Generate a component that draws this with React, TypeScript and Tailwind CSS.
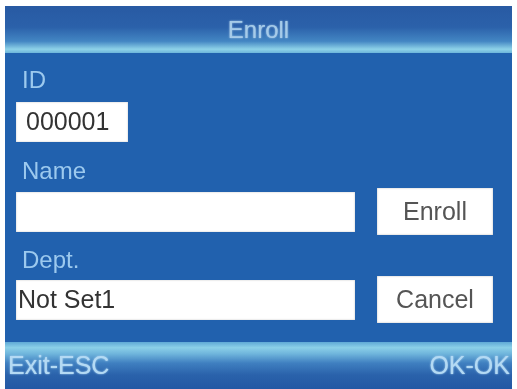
import React from 'react';

// 登録画面（端末のEnrollダイアログ）
const Label = ({ children }: { children: React.ReactNode }) => (
  <div className="pl-[6px] text-[24px] leading-[26px] text-[#9cc9ee]">{children}</div>
);

const Field = ({ value, className = '' }: { value?: string; className?: string }) => (
  <div
    className={`h-[40px] bg-white flex items-center text-[25px] text-[#333] shadow-[inset_0_0_2px_rgba(0,0,0,0.25)] ${className}`}
  >
    {value}
  </div>
);

const Button = ({ label }: { label: string }) => (
  <button className="w-[116px] h-[47px] bg-white flex items-center justify-center text-[25px] text-[#555] shadow-[inset_0_0_2px_rgba(0,0,0,0.3)]">
    {label}
  </button>
);

export default function App() {
  return (
    <div
      className="w-[517px] h-[389px] bg-white pt-[6px] px-[5px] flex"
      style={{ fontFamily: '"Liberation Sans", Arial, sans-serif' }}
    >
      <div className="flex-1 flex flex-col bg-[#2161ae] blur-[0.4px]">
        {/* title bar */}
        <div className="h-[47px] flex items-center justify-center bg-[linear-gradient(to_bottom,#285aa3_0%,#2b61aa_45%,#4386c3_75%,#8ed2e8_92%,#6db5da_100%)]">
          <span className="text-[24px] text-[#a6cbe9] [text-shadow:0_0_2px_#a6cbe9]">Enroll</span>
        </div>

        {/* body */}
        <div className="flex-1 flex flex-col pl-[11px] pr-[19px]">
          <div className="mt-[14px]">
            <Label>ID</Label>
          </div>
          <Field value="000001" className="mt-[9px] w-[112px] pl-[10px]" />

          <div className="mt-[16px]">
            <Label>Name</Label>
          </div>
          <div className="mt-[4px] flex items-center gap-[22px]">
            <Field className="w-[339px]" />
            <Button label="Enroll" />
          </div>

          <div className="mt-[12px]">
            <Label>Dept.</Label>
          </div>
          <div className="mt-[3px] flex items-center gap-[22px]">
            <Field value="Not Set1" className="w-[339px] pl-[2px]" />
            <Button label="Cancel" />
          </div>
        </div>

        {/* footer */}
        <div className="h-[47px] flex items-center justify-between pl-[3px] pr-[2px] bg-[linear-gradient(to_bottom,#5fa9d6_0%,#8bd0e8_12%,#6fb5dc_25%,#3f7fc0_45%,#2a62ab_70%,#2358a4_100%)]">
          <span className="text-[25px] text-[#b4daf4] [text-shadow:0_0_2px_#b4daf4]">Exit-ESC</span>
          <span className="text-[25px] text-[#b4daf4] [text-shadow:0_0_2px_#b4daf4]">OK-OK</span>
        </div>
      </div>
    </div>
  );
}
